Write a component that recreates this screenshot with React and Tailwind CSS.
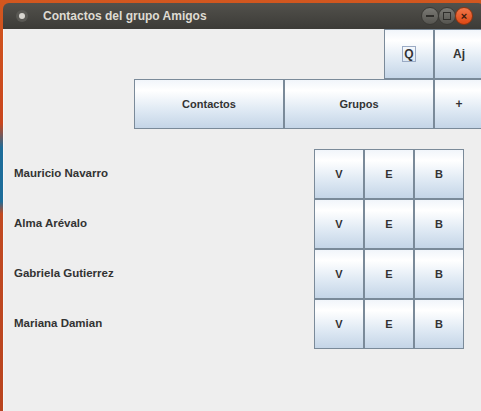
const FONT = { fontFamily: '"Liberation Sans", Arial, sans-serif' }

const CONTACTS = ['Mauricio Navarro', 'Alma Arévalo', 'Gabriela Gutierrez', 'Mariana Damian']

function Btn({ children, className = '' }) {
  return (
    <button
      className={`h-[50px] shrink-0 border border-[#7a8a99] bg-[linear-gradient(to_bottom,#f1f5fa_0%,#ffffff_22%,#dde8f3_65%,#c4d5e7_100%)] flex items-center justify-center text-[11px] font-bold text-[#333333] ${className}`}
    >
      {children}
    </button>
  )
}

export default function App() {
  return (
    <div
      className="w-[481px] h-[411px] overflow-hidden bg-[linear-gradient(to_bottom,#d2571f_0%,#c9461e_30%,#1d6d9a_36%,#1d6d9a_49%,#c24a22_52%,#b9441f_100%)] pl-[3px] pt-[3px]"
      style={FONT}
    >
      <div className="w-[481px] h-[408px] flex flex-col">
        {/* Title bar */}
        <div className="h-[26px] shrink-0 rounded-tl-[6px] rounded-tr-[6px] bg-[linear-gradient(to_bottom,#52514c,#3c3b37)] flex items-center">
          <div className="w-[12px] h-[12px] rounded-full bg-[#5a5954] ml-[13px] flex items-center justify-center">
            <div className="w-[6px] h-[6px] rounded-full bg-[#d8d6d0]" />
          </div>
          <span className="ml-[15px] text-[12px] font-bold text-[#dfdbd2]">
            Contactos del grupo Amigos
          </span>
          <div className="ml-auto mr-[11px] flex items-center">
            <div className="w-[18px] h-[18px] rounded-full bg-[linear-gradient(to_bottom,#7a7974,#55544f)] border border-[#3a3935] flex items-center justify-center">
              <div className="w-[8px] h-[1.5px] bg-[#2e2d2a]" />
            </div>
            <div className="w-[18px] h-[18px] -ml-[1px] rounded-full bg-[linear-gradient(to_bottom,#7a7974,#55544f)] border border-[#3a3935] flex items-center justify-center">
              <div className="w-[8px] h-[8px] border-[1.5px] border-[#2e2d2a]" />
            </div>
            <div className="w-[18px] h-[18px] -ml-[1px] rounded-full bg-[linear-gradient(to_bottom,#f2774a,#dd4814)] border border-[#8e3410] flex items-center justify-center text-[#3b1a0c] text-[11px] font-bold leading-none">
              ×
            </div>
          </div>
        </div>

        {/* Content */}
        <div className="flex-1 bg-[#eeeeee] border-l border-[#f7f7f7] flex flex-col">
          <div className="flex justify-end">
            <Btn className="w-[50px]">
              <span className="border border-[#9aaac4] px-[1px] leading-[14px] text-[12px]">Q</span>
            </Btn>
            <Btn className="w-[50px] text-[12px]">Aj</Btn>
          </div>
          <div className="flex justify-end">
            <Btn className="w-[150px]">Contactos</Btn>
            <Btn className="w-[150px]">Grupos</Btn>
            <Btn className="w-[50px] text-[12px]">+</Btn>
          </div>

          <div className="mt-[20px] flex flex-col">
            {CONTACTS.map((name) => (
              <div key={name} className="flex items-center justify-between pl-[10px] pr-[20px]">
                <span className="text-[11.5px] font-bold text-[#333333]">{name}</span>
                <div className="flex">
                  <Btn className="w-[50px]">V</Btn>
                  <Btn className="w-[50px]">E</Btn>
                  <Btn className="w-[50px]">B</Btn>
                </div>
              </div>
            ))}
          </div>
        </div>
      </div>
    </div>
  )
}
